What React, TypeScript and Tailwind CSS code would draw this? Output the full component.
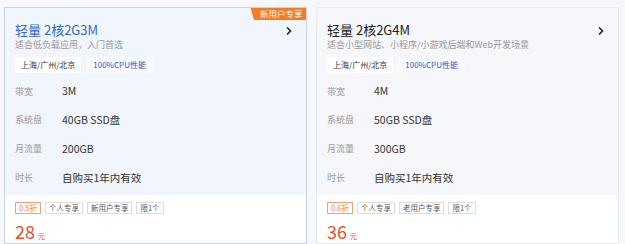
import React from 'react';

interface Plan {
  name: string;
  desc: string;
  bandwidth: string;
  disk: string;
  traffic: string;
  discount: string;
  userTag: string;
  price: string;
  active: boolean;
}

const plans: Plan[] = [
  {
    name: '2核2G3M',
    desc: '适合低负载应用，入门首选',
    bandwidth: '3M',
    disk: '40GB SSD盘',
    traffic: '200GB',
    discount: '0.5折',
    userTag: '新用户专享',
    price: '28',
    active: true,
  },
  {
    name: '2核2G4M',
    desc: '适合小型网站、小程序/小游戏后端和Web开发场景',
    bandwidth: '4M',
    disk: '50GB SSD盘',
    traffic: '300GB',
    discount: '0.6折',
    userTag: '老用户专享',
    price: '36',
    active: false,
  },
];

const font = { fontFamily: '"Noto Sans CJK SC", "Liberation Sans", sans-serif' };

const Chevron = () => (
  <svg width="8" height="10" viewBox="0 0 8 10" className="mt-[2px]">
    <path d="M2 1.5 L5.5 5 L2 8.5" fill="none" stroke="#222" strokeWidth="1.6" />
  </svg>
);

const PlanCard: React.FC<{ plan: Plan }> = ({ plan }) => {
  const specs = [
    ['带宽', plan.bandwidth],
    ['系统盘', plan.disk],
    ['月流量', plan.traffic],
    ['时长', '自购买1年内有效'],
  ];
  return (
    <div
      className={`relative w-[303px] shrink-0 border overflow-hidden ${
        plan.active ? 'border-[#c6d3ea]' : 'border-[#e6ebf3]'
      }`}
    >
      {plan.active && (
        <div
          className="absolute right-0 top-[-2px] h-[14px] w-[56px] bg-[#f77b22] text-white text-[8.5px] leading-[14px] pl-[10px]"
          style={{ clipPath: 'polygon(0 0, 100% 0, 100% 100%, 4px 100%)' }}
        >
          新用户专享
        </div>
      )}
      <div className={`px-[10px] pt-[14px] ${plan.active ? 'bg-[#f1f5fc]' : 'bg-[#f5f7fb]'}`}>
        <div className="flex items-center justify-between pr-[3px] h-[16px]">
          <div className={`text-[13px] leading-[16px] ${plan.active ? 'text-[#3466c8]' : 'text-[#222]'}`}>
            轻量 {plan.name}
          </div>
          <Chevron />
        </div>
        <div className="text-[9px] leading-[14px] text-[#999]">{plan.desc}</div>
        <div className="mt-[5px] flex gap-[5px]">
          <span className="h-[16px] px-[6px] bg-white text-[8px] leading-[16px] text-[#333]">上海/广州/北京</span>
          <span className="h-[16px] px-[7px] bg-[#f7f9fd] text-[8px] leading-[16px] text-[#2a5fc8]">100%CPU性能</span>
        </div>
        <div className="mt-[4px] pb-[3px]">
          {specs.map(([k, v]) => (
            <div key={k} className="flex items-center h-[28.7px]">
              <span className="w-[47px] text-[9px] text-[#999]">{k}</span>
              <span className="text-[10.5px] text-[#333]">{v}</span>
            </div>
          ))}
        </div>
      </div>
      <div className="bg-white px-[10px] pt-[7px] h-[60px]">
        <div className="flex gap-[4px]">
          <span className="h-[12px] px-[3px] border border-[#f4a077] text-[7.5px] leading-[10px] text-[#f07a3c]">{plan.discount}</span>
          <span className="h-[12px] px-[3px] border border-[#ddd] text-[7.5px] leading-[10px] text-[#555]">个人专享</span>
          <span className="h-[12px] px-[3px] border border-[#ddd] text-[7.5px] leading-[10px] text-[#555]">{plan.userTag}</span>
          <span className="h-[12px] px-[3px] border border-[#ddd] text-[7.5px] leading-[10px] text-[#555]">限1个</span>
        </div>
        <div className="mt-[9px] flex items-baseline text-[#e5502b] leading-none">
          <span className="text-[18px] leading-[16px]">{plan.price}</span>
          <span className="ml-[3px] text-[7px] leading-none">元</span>
        </div>
      </div>
    </div>
  );
};

export default function App() {
  return (
    <div className="w-[625px] h-[244px] overflow-hidden bg-[#f7f8fb] flex gap-[9px] pl-[4px] pt-[7px]" style={font}>
      {plans.map((p) => (
        <PlanCard key={p.name} plan={p} />
      ))}
    </div>
  );
}
